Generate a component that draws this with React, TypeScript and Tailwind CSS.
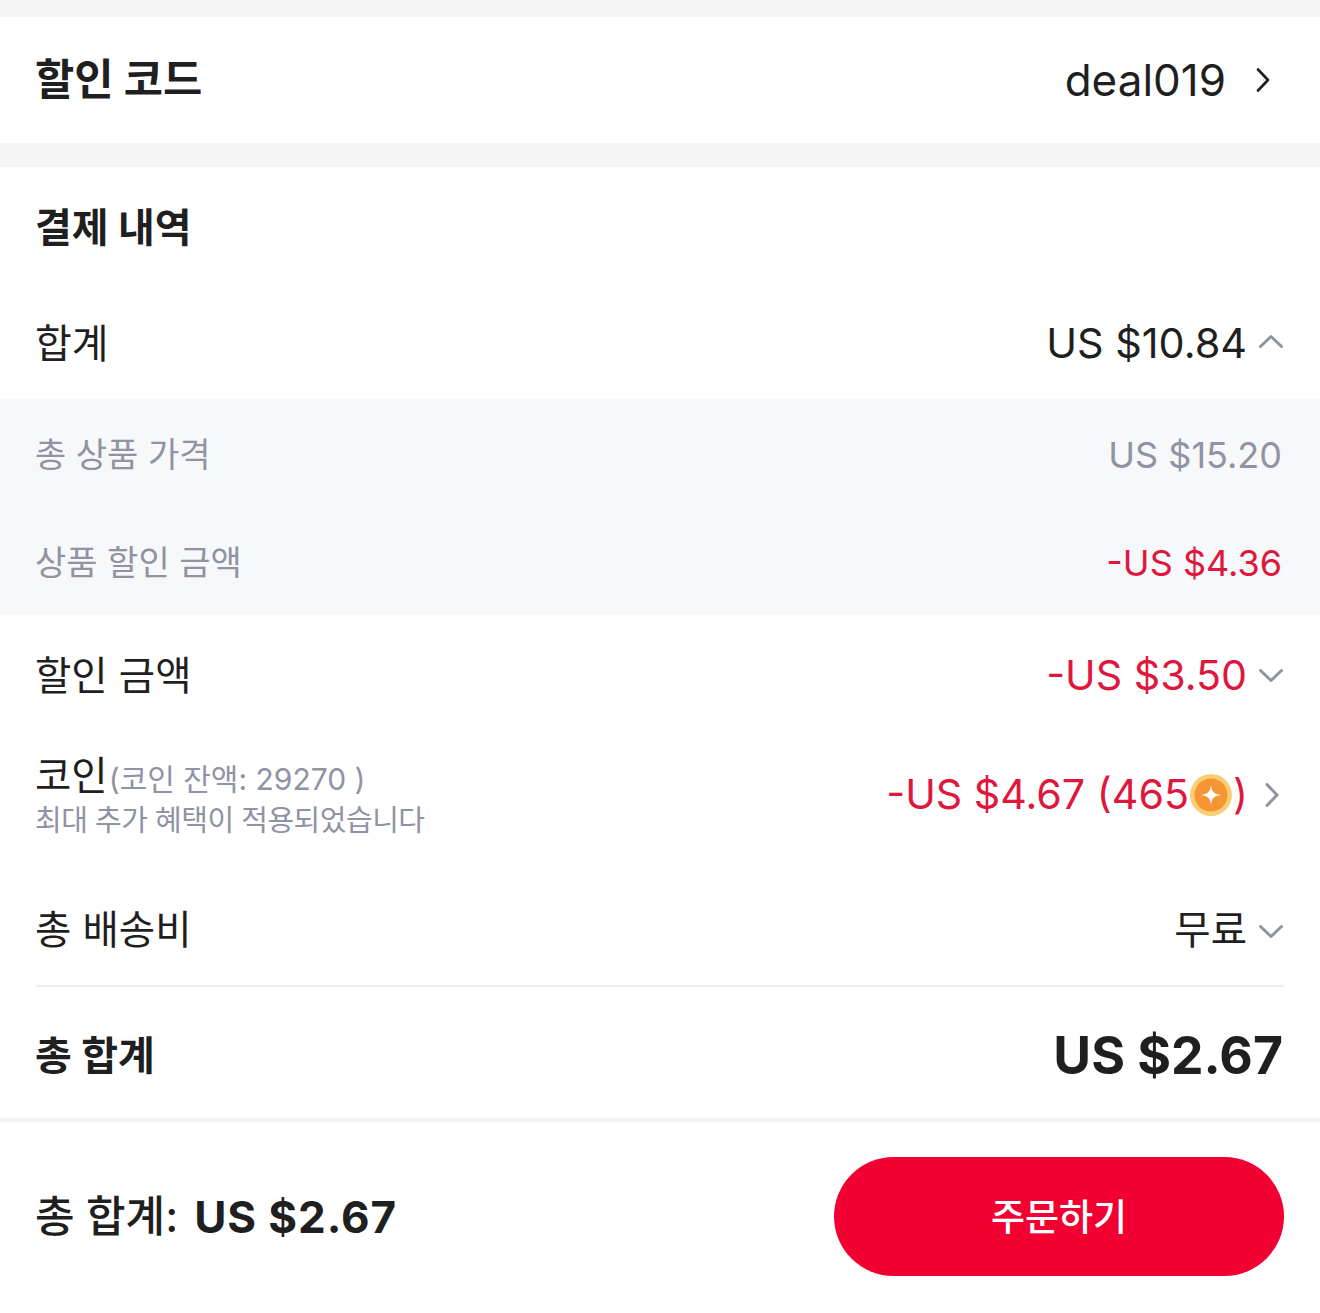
import React from "react";

const F = "font-['Inter','Noto_Sans_CJK_KR',sans-serif]";

function Chevron({ dir, color = "#8f93a3", size = 24, sw = 3 }: { dir: "up" | "down" | "right"; color?: string; size?: number; sw?: number }) {
  const d = dir === "up" ? "M1.5 16.5 L12 6.5 L22.5 16.5" : dir === "down" ? "M1.5 7.5 L12 17.5 L22.5 7.5" : "M7 1.5 L17 12 L7 22.5";
  return (
    <svg width={size} height={size} viewBox="0 0 24 24" fill="none" className="shrink-0">
      <path d={d} stroke={color} strokeWidth={sw} strokeLinecap="round" strokeLinejoin="round" />
    </svg>
  );
}

function Coin() {
  return (
    <svg width="44" height="44" viewBox="0 0 44 44" className="shrink-0">
      <circle cx="22" cy="22" r="21" fill="#f8cf73" />
      <circle cx="22" cy="22" r="16.5" fill="#f79433" />
      <path d="M22 12 C23 19 25 21 32 22 C25 23 23 25 22 32 C21 25 19 23 12 22 C19 21 21 19 22 12 Z" fill="#fff" />
    </svg>
  );
}

export default function App() {
  return (
    <div className={`${F} w-[1320px] h-[1313px] bg-white text-[#1f1f1f] overflow-hidden`}>
      <div className="h-[17px] bg-[#f5f5f5]" />
      <div className="h-[126px] flex items-center justify-between pl-[35px] pr-[45px]">
        <span className="text-[42.7px] font-bold leading-none">할인 코드</span>
        <div className="flex items-center">
          <span className="text-[44px] leading-none">deal019</span>
          <span className="ml-[25px]"><Chevron dir="right" color="#1f1f1f" size={24} sw={2.6} /></span>
        </div>
      </div>
      <div className="h-[24px] bg-[#f5f5f5]" />
      <div className="h-[118px] flex items-center pl-[35px] pt-[3px]">
        <span className="text-[40px] font-bold leading-none">결제 내역</span>
      </div>
      <div className="h-[114px] flex items-center justify-between pl-[35px] pr-[37px] pt-[3px]">
        <span className="text-[40px] leading-none">합계</span>
        <div className="flex items-center">
          <span className="text-[41.4px] leading-none">US $10.84</span>
          <span className="ml-[12px] -mt-[3px]"><Chevron dir="up" /></span>
        </div>
      </div>
      <div className="bg-[#f7f8fa] text-[#8f93a3]">
        <div className="h-[108px] flex items-center justify-between pl-[35px] pr-[38px] pt-[4px]">
          <span className="text-[34px] leading-none">총 상품 가격</span>
          <span className="text-[36px] leading-none">US $15.20</span>
        </div>
        <div className="h-[108px] flex items-center justify-between pl-[35px] pr-[38px] pt-[4px]">
          <span className="text-[34px] leading-none">상품 할인 금액</span>
          <span className="text-[36px] leading-none text-[#e0173d]">-US $4.36</span>
        </div>
      </div>
      <div className="h-[120px] flex items-center justify-between pl-[35px] pr-[37px] pt-[3px]">
        <span className="text-[39.5px] leading-none">할인 금액</span>
        <div className="flex items-center -mt-[2px]">
          <span className="text-[41.2px] leading-none text-[#e0173d]">-US $3.50</span>
          <span className="ml-[12px]"><Chevron dir="down" /></span>
        </div>
      </div>
      <div className="h-[120px] flex items-center justify-between pl-[35px] pr-[36px] pt-[3px]">
        <div>
          <div className="flex items-baseline leading-none">
            <span className="text-[39.5px] leading-[44px]">코인</span>
            <span className="ml-[1px] text-[30px] leading-[44px] text-[#8f93a3]">(코인 잔액: 29270 )</span>
          </div>
          <div className="mt-[2px] text-[29px] leading-[36px] text-[#8f93a3] tracking-[-0.5px]">최대 추가 혜택이 적용되었습니다</div>
        </div>
        <div className="flex items-center -mt-[3px]">
          <span className="text-[41.2px] leading-none text-[#e0173d]">-US $4.67 (465</span>
          <Coin />
          <span className="text-[41.2px] leading-none text-[#e0173d]">)</span>
          <span className="ml-[12px]"><Chevron dir="right" /></span>
        </div>
      </div>
      <div className="h-[130px] flex items-center justify-between pl-[35px] pr-[37px] pt-[22px]">
        <span className="text-[39.5px] leading-none">총 배송비</span>
        <div className="flex items-center">
          <span className="text-[39.5px] leading-none">무료</span>
          <span className="ml-[12px]"><Chevron dir="down" /></span>
        </div>
      </div>
      <div className="mx-9 h-[2px] bg-[#eeeeee]" />
      <div className="h-[131px] flex items-center justify-between pl-[35px] pr-[37px] pt-[7px]">
        <span className="text-[40px] font-bold leading-none">총 합계</span>
        <span className="text-[51.7px] font-bold leading-none">US $2.67</span>
      </div>
      <div className="h-[4px] bg-[#f5f5f5]" />
      <div className="h-[191px] flex items-start justify-between pl-[35px] pr-9 pt-[35px]">
        <span className="h-[119px] flex items-center text-[43px] leading-none font-medium">
          <span>총 합계:</span>
          <span className="ml-[16px] font-bold text-[44px] tracking-[0.9px]">US $2.67</span>
        </span>
        <button className="w-[450px] h-[119px] rounded-[60px] bg-[#f10031] text-white text-[37px] font-medium leading-none pt-[2px]">주문하기</button>
      </div>
    </div>
  );
}
